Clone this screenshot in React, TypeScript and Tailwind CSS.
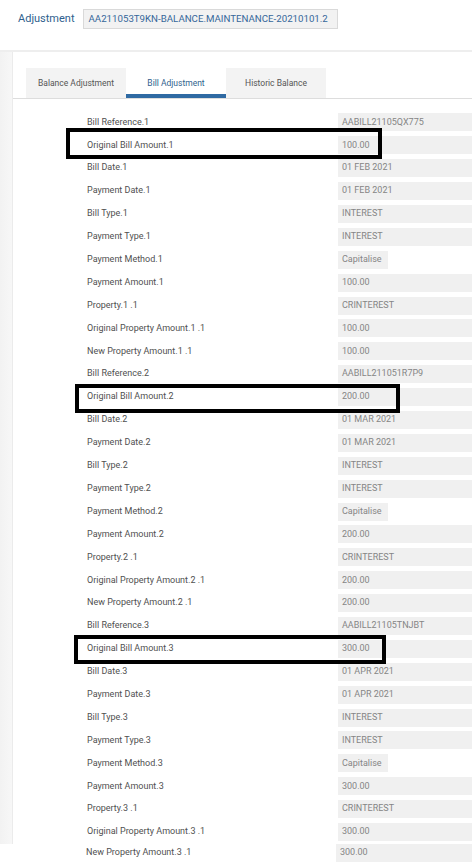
import React from 'react';

type Row = { label: string; value: string; select?: boolean; marked?: boolean };

function billRows(n: number, ref: string, amount: string, date: string): Row[] {
  return [
    { label: `Bill Reference.${n}`, value: ref },
    { label: `Original Bill Amount.${n}`, value: amount, marked: true },
    { label: `Bill Date.${n}`, value: date },
    { label: `Payment Date.${n}`, value: date },
    { label: `Bill Type.${n}`, value: 'INTEREST' },
    { label: `Payment Type.${n}`, value: 'INTEREST' },
    { label: `Payment Method.${n}`, value: 'Capitalise', select: true },
    { label: `Payment Amount.${n}`, value: amount },
    { label: `Property.${n} .1`, value: 'CRINTEREST' },
    { label: `Original Property Amount.${n} .1`, value: amount },
    { label: `New Property Amount.${n} .1`, value: amount },
  ];
}

const rows: Row[] = [
  ...billRows(1, 'AABILL21105QX775', '100.00', '01 FEB 2021'),
  ...billRows(2, 'AABILL211051R7P9', '200.00', '01 MAR 2021'),
  ...billRows(3, 'AABILL21105TNJBT', '300.00', '01 APR 2021'),
];

const tabs = ['Balance Adjustment', 'Bill Adjustment', 'Historic Balance'];

function Field({ row }: { row: Row }) {
  return (
    <div className="flex h-[22.9px] items-center">
      <div className="w-[325px] shrink-0 pl-[74px] text-[9px] text-[#505050]">{row.label}</div>
      {row.select ? (
        <div className="flex h-[18px] w-[50px] items-center bg-[#f0f0f0] pl-[4px] text-[9px] text-[#858585]">
          {row.value}
        </div>
      ) : (
        <div className="flex h-[18px] flex-1 items-center bg-[#f0f0f0] pl-[4px] text-[9px] text-[#858585]">
          {row.value}
        </div>
      )}
    </div>
  );
}

export default function App() {
  const body = rows.slice(0, rows.length - 1);
  const last = rows[rows.length - 1];

  return (
    <div className="relative h-[863px] w-[472px] overflow-hidden bg-white font-['Roboto',sans-serif]">
      {/* header */}
      <div className="flex h-[50px] items-start gap-[8px] pl-[18px] pt-[9px]">
        <span className="flex h-[20px] items-center text-[11px] text-[#2f5f8e]">Adjustment</span>
        <span className="flex h-[20px] w-[255px] items-center border border-[#d9d9d9] bg-[#f2f2f2] pl-[5px] text-[9.7px] text-[#35679a]">
          AA211053T9KN-BALANCE.MAINTENANCE-20210101.2
        </span>
      </div>
      <div className="h-[2px] bg-[#eeeeee]" />

      <div className="flex">
        <div className="w-[13px] shrink-0 border-r border-[#ebebeb] bg-gradient-to-r from-[#f2f2f2] to-[#f7f7f7]" />
        <div className="flex-1">
          <div className="flex border-b border-[#dddddd] pl-[13px] pt-[16px]">
            {tabs.map((t, i) => (
              <div
                key={t}
                className={
                  i === 1
                    ? 'flex h-[30px] w-[100px] items-center justify-center border-b-[4px] border-[#2f6aa3] pt-[4px] text-[8.5px] text-[#2f5f8e]'
                    : 'flex h-[30px] w-[100px] items-center justify-center bg-[#f3f3f3] text-[8.5px] text-[#555]'
                }
              >
                {t}
              </div>
            ))}
          </div>
          <div className="pt-[12px]">
            {body.map((r) => (
              <Field key={r.label} row={r} />
            ))}
          </div>
        </div>
      </div>

      <div className="flex h-[18px] items-center">
        <div className="w-[336px] shrink-0 pl-[86px] text-[9px] text-[#505050]">{last.label}</div>
        <div className="flex h-[18px] flex-1 items-center bg-[#f0f0f0] pl-[4px] text-[9px] text-[#858585]">
          {last.value}
        </div>
      </div>

      {/* annotation boxes */}
      <div className="absolute left-[66px] top-[128px] h-[31px] w-[316px] border-[4px] border-black" />
      <div className="absolute left-[75px] top-[384px] h-[29px] w-[325px] border-[4px] border-black" />
      <div className="absolute left-[74px] top-[635px] h-[29px] w-[312px] border-[4px] border-black" />
    </div>
  );
}
